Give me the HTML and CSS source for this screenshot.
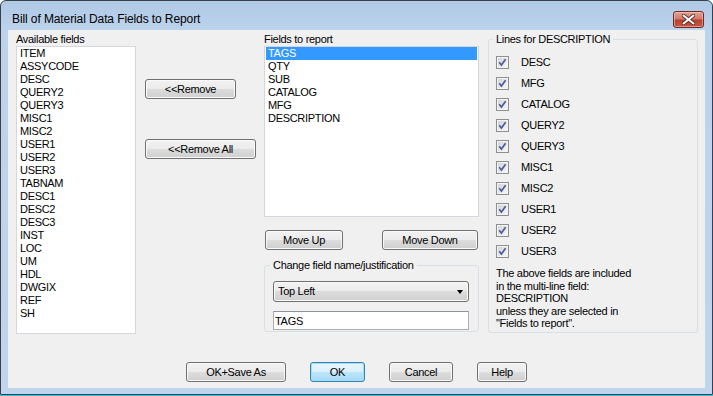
FILE: index.html
```html
<!DOCTYPE html>
<html lang="en">
<head>
    <meta charset="UTF-8">
    <title>Bill of Material Data Fields to Report</title>
    <link rel="stylesheet" href="styles.css">
</head>
<body>
    <div class="window">
        <div class="titlebar">
            <span class="title">Bill of Material Data Fields to Report</span>
            <button class="close" aria-label="Close">
                <svg width="13" height="11" viewBox="0 0 13 11">
                    <path d="M1.5 1.5 L11.5 9.5 M11.5 1.5 L1.5 9.5" stroke="#5a2a24" stroke-width="3.6" stroke-linecap="round"/>
                    <path d="M1.5 1.5 L11.5 9.5 M11.5 1.5 L1.5 9.5" stroke="#ffffff" stroke-width="2" stroke-linecap="round"/>
                </svg>
            </button>
        </div>

        <div class="client">
            <div class="main">
                <!-- left list -->
                <div class="col col-avail">
                    <div class="caption">Available fields</div>
                    <ul class="listbox avail">
                        <li>ITEM</li>
                        <li>ASSYCODE</li>
                        <li>DESC</li>
                        <li>QUERY2</li>
                        <li>QUERY3</li>
                        <li>MISC1</li>
                        <li>MISC2</li>
                        <li>USER1</li>
                        <li>USER2</li>
                        <li>USER3</li>
                        <li>TABNAM</li>
                        <li>DESC1</li>
                        <li>DESC2</li>
                        <li>DESC3</li>
                        <li>INST</li>
                        <li>LOC</li>
                        <li>UM</li>
                        <li>HDL</li>
                        <li>DWGIX</li>
                        <li>REF</li>
                        <li>SH</li>
                    </ul>
                </div>

                <div class="col col-remove">
                    <button class="btn btn-remove">&lt;&lt;Remove</button>
                    <button class="btn btn-remove-all">&lt;&lt;Remove All</button>
                </div>

                <!-- fields to report -->
                <div class="col col-report">
                    <div class="caption">Fields to report</div>
                    <ul class="listbox report">
                        <li class="selected">TAGS</li>
                        <li>QTY</li>
                        <li>SUB</li>
                        <li>CATALOG</li>
                        <li>MFG</li>
                        <li>DESCRIPTION</li>
                    </ul>
                    <div class="move-row">
                        <button class="btn btn-up">Move Up</button>
                        <button class="btn btn-down">Move Down</button>
                    </div>
                    <fieldset class="group change">
                        <legend>Change field name/justification</legend>
                        <div class="combo">
                            <span>Top Left</span>
                            <span class="arrow"></span>
                        </div>
                        <input class="textbox" type="text" value="TAGS">
                    </fieldset>
                </div>

                <!-- description lines -->
                <fieldset class="group lines">
                    <legend>Lines for DESCRIPTION</legend>
                    <div class="checks">
                        <label class="check"><svg class="box" width="13" height="13" viewBox="0 0 13 13"><use href="#tick"/></svg>DESC</label>
                        <label class="check"><svg class="box" width="13" height="13" viewBox="0 0 13 13"><use href="#tick"/></svg>MFG</label>
                        <label class="check"><svg class="box" width="13" height="13" viewBox="0 0 13 13"><use href="#tick"/></svg>CATALOG</label>
                        <label class="check"><svg class="box" width="13" height="13" viewBox="0 0 13 13"><use href="#tick"/></svg>QUERY2</label>
                        <label class="check"><svg class="box" width="13" height="13" viewBox="0 0 13 13"><use href="#tick"/></svg>QUERY3</label>
                        <label class="check"><svg class="box" width="13" height="13" viewBox="0 0 13 13"><use href="#tick"/></svg>MISC1</label>
                        <label class="check"><svg class="box" width="13" height="13" viewBox="0 0 13 13"><use href="#tick"/></svg>MISC2</label>
                        <label class="check"><svg class="box" width="13" height="13" viewBox="0 0 13 13"><use href="#tick"/></svg>USER1</label>
                        <label class="check"><svg class="box" width="13" height="13" viewBox="0 0 13 13"><use href="#tick"/></svg>USER2</label>
                        <label class="check"><svg class="box" width="13" height="13" viewBox="0 0 13 13"><use href="#tick"/></svg>USER3</label>
                    </div>
                    <p class="note">The above fields are included<br>in the multi-line field:<br>DESCRIPTION<br>unless they are selected in<br>"Fields to report".</p>
                </fieldset>
            </div>

            <div class="footer">
                <button class="btn btn-saveas">OK+Save As</button>
                <button class="btn btn-ok">OK</button>
                <button class="btn btn-cancel">Cancel</button>
                <button class="btn btn-help">Help</button>
            </div>
        </div>
    </div>
    <div class="taskbar-edge"></div>

    <svg width="0" height="0" class="defs">
        <defs>
            <linearGradient id="boxfill" x1="0" y1="0" x2="1" y2="1">
                <stop offset="0" stop-color="#d4d4d4"/>
                <stop offset="1" stop-color="#f6f6f6"/>
            </linearGradient>
            <g id="tick">
                <rect x="0.5" y="0.5" width="12" height="12" fill="#f4f4f4" stroke="#8e8f8f"/>
                <rect x="2" y="2" width="9" height="9" fill="url(#boxfill)"/>
                <path d="M3.2 6.3 L5.4 9 L9.6 3.2" fill="none" stroke="#4a5e9c" stroke-width="1.7"/>
            </g>
        </defs>
    </svg>
</body>
</html>
```

FILE: styles.css
```css
* {
    margin: 0;
    padding: 0;
    box-sizing: border-box;
}

body {
    background-color: #ffffff;
    width: 713px;
    height: 396px;
    overflow: hidden;
    font-family: 'Liberation Sans', Arial, sans-serif;
    font-size: 11px;
    letter-spacing: -0.3px;
    color: #000000;
}

.window {
    width: 713px;
    height: 395px;
    border: 1px solid #3b4048;
    border-radius: 6px 6px 0 0;
    background: linear-gradient(#b0c9e6, #bcd3ec 30px, #bfd5ec);
    display: flex;
    flex-direction: column;
}

.taskbar-edge {
    height: 1px;
    background-color: #24c6e8;
}

.defs {
    position: absolute;
}

/* title bar */
.titlebar {
    height: 29px;
    display: flex;
    align-items: flex-start;
    justify-content: space-between;
    padding: 0 8px 0 11px;
}

.title {
    font-size: 12px;
    letter-spacing: -0.1px;
    line-height: 14px;
    margin-top: 11px;
    color: #000000;
}

.close {
    width: 31px;
    height: 17px;
    margin-top: 10px;
    border: 1px solid #6d2b24;
    border-radius: 3px;
    background: linear-gradient(#e4a194, #d07a6b 45%, #b8402f 55%, #c35a45);
    box-shadow: inset 0 0 0 1px rgba(255, 210, 200, 0.5);
    display: flex;
    align-items: center;
    justify-content: center;
}

/* client area */
.client {
    height: 358px;
    margin-left: 7px;
    width: 697px;
    background-color: #f0f0f0;
    padding: 3px 0 0 8px;
}

.main {
    display: flex;
    align-items: flex-start;
}

.caption {
    line-height: 13px;
    height: 13px;
}

.listbox {
    list-style: none;
    background-color: #ffffff;
    border: 1px solid #d4d8dd;
    padding: 0 1px;
    line-height: 13px;
}

.listbox li {
    padding-left: 2px;
    height: 13px;
}

.col-avail {
    width: 120px;
}

.avail {
    height: 288px;
}

.col-remove {
    width: 110px;
    margin-left: 9px;
    display: flex;
    flex-direction: column;
    align-items: flex-start;
}

.btn {
    height: 20px;
    font-family: inherit;
    font-size: 11px;
    letter-spacing: -0.3px;
    color: #000000;
    border: 1px solid #707070;
    border-radius: 3px;
    background: linear-gradient(#f2f2f2, #ebebeb 50%, #dddddd 50%, #cfcfcf);
    box-shadow: inset 0 0 0 1px #fafafa;
    text-align: center;
    padding: 0;
}

.btn-remove {
    width: 91px;
    margin-top: 46px;
}

.btn-remove-all {
    width: 111px;
    margin-top: 40px;
}

.col-report {
    width: 215px;
    margin-left: 9px;
}

.report {
    height: 171px;
}

.report li.selected {
    background-color: #3399ff;
    color: #ffffff;
}

.move-row {
    display: flex;
    justify-content: space-between;
    padding: 0 1px;
    margin-top: 13px;
}

.btn-up {
    width: 78px;
}

.btn-down {
    width: 96px;
}

.group {
    border: 1px solid #d5dfe5;
    border-radius: 3px;
}

.group legend {
    line-height: 13px;
    padding: 0 3px;
}

.change {
    margin-top: 9px;
    padding: 0 9px 1px 5px;
}

.combo {
    height: 21px;
    margin: 9px 0 0 3px;
    width: 196px;
    border: 1px solid #707070;
    border-radius: 3px;
    background: linear-gradient(#f2f2f2, #ebebeb 50%, #dddddd 50%, #cfcfcf);
    box-shadow: inset 0 0 0 1px #fafafa;
    display: flex;
    align-items: center;
    justify-content: space-between;
    padding: 0 5px 0 4px;
    line-height: 13px;
}

.arrow {
    width: 0;
    height: 0;
    border-left: 3.5px solid transparent;
    border-right: 3.5px solid transparent;
    border-top: 4px solid #000000;
}

.textbox {
    display: block;
    width: 196px;
    height: 19px;
    margin: 9px 0 0 3px;
    border: 1px solid #abadb3;
    border-top-color: #8f939a;
    background-color: #ffffff;
    font-family: inherit;
    font-size: 11px;
    letter-spacing: -0.3px;
    padding: 0 1px;
    outline: none;
}

/* lines for description */
.lines {
    width: 210px;
    height: 300px;
    margin-left: 9px;
    padding: 0 4px;
}

.checks {
    padding-top: 5px;
    padding-left: 3px;
}

.check {
    display: flex;
    align-items: center;
    height: 21px;
    line-height: 13px;
    padding-top: 1px;
}

.box {
    flex: none;
    margin-right: 12px;
}

.note {
    margin-top: 6px;
    padding-left: 3px;
    line-height: 12.5px;
}

/* dialog buttons */
.footer {
    display: flex;
    justify-content: center;
    gap: 24px;
    margin-top: 28px;
    margin-left: -8px;
}

.btn-saveas {
    width: 100px;
}

.btn-ok {
    width: 55px;
    border-color: #3c7fb1;
    box-shadow: inset 0 0 0 1px #9ee1f7;
    background: linear-gradient(#eaf6fd, #d9f0fc 50%, #bee6fd 50%, #a7d9f5);
}

.btn-cancel {
    width: 64px;
}

.btn-help {
    width: 50px;
}
```
